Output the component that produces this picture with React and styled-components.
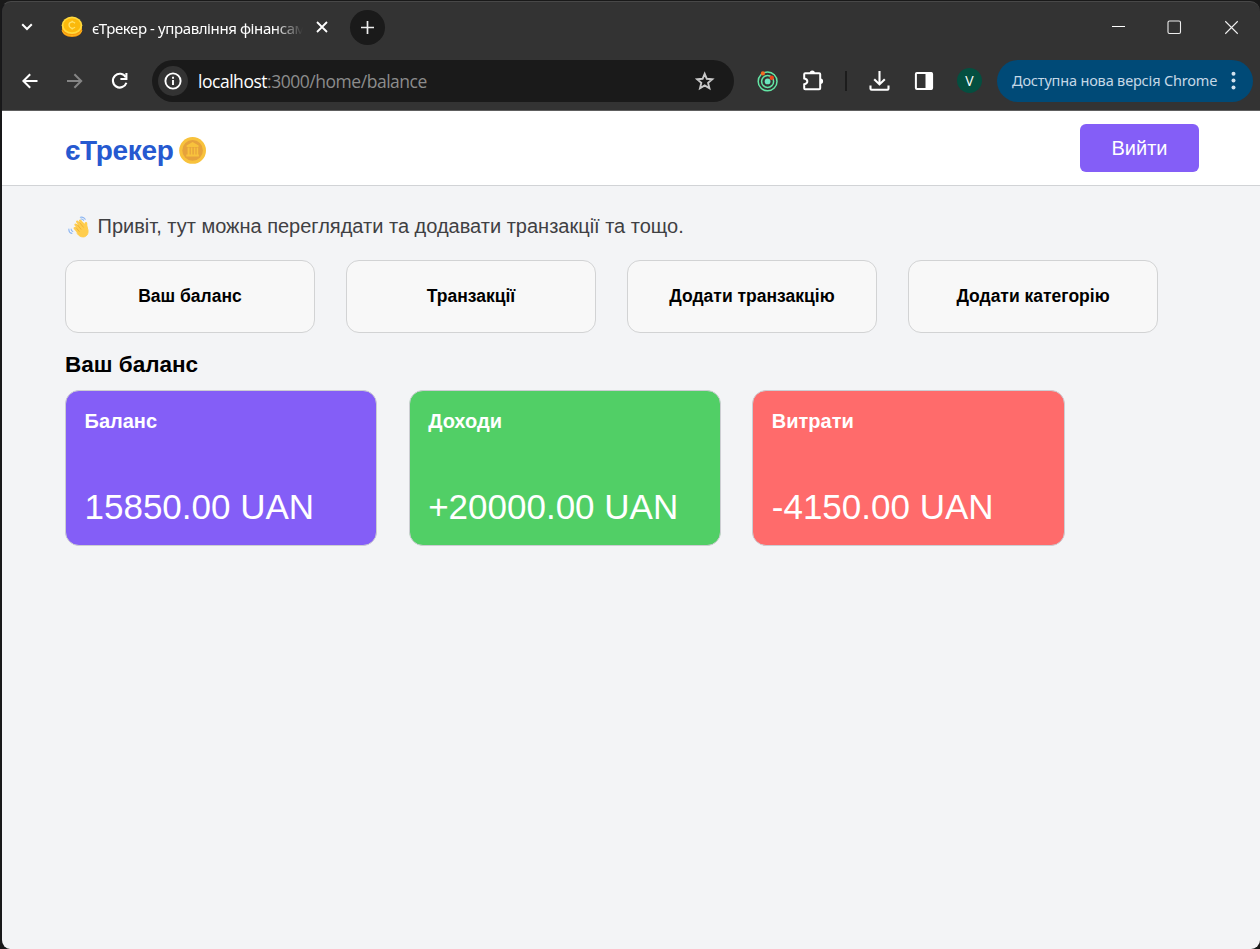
import React from "react";
import styled, { createGlobalStyle } from "styled-components";

const GlobalStyle = createGlobalStyle`
  *, *::before, *::after { box-sizing: border-box; }
  body { margin: 0; background: #191919; overflow: hidden; }
  button { font: inherit; border: 0; padding: 0; background: none; color: inherit; }
  h1, h2, h3, p { margin: 0; }
  svg { display: block; flex: none; }
`;

const Desktop = styled.div`
  height: 949px;
  padding: 1px 0 0 1px;
  background: linear-gradient(#1c1c1c 0 15px, #3a3a3a 15px 66px, #111116 66px);
`;

const Window = styled.div`
  height: 948px;
  display: flex;
  flex-direction: column;
  overflow: hidden;
  border-radius: 10px 10px 9px 9px;
  border-top: 1px solid #484848;
  border-left: 1px solid #17171a;
  background: #333333;
  box-shadow: 0 0 0 14px #191919;
`;

const TabStrip = styled.div`
  height: 52px;
  flex: none;
  display: flex;
  align-items: center;
  padding-bottom: 2px;
  color: #fff;
`;

const TabSearch = styled.button`
  width: 50px;
  height: 50px;
  display: grid;
  place-items: center;
`;

const Tab = styled.div`
  width: 279px;
  display: flex;
  align-items: center;
  padding-left: 9px;
`;

const TabTitle = styled.span`
  width: 212px;
  margin: 2px 12px 0 9px;
  overflow: hidden;
  white-space: nowrap;
  font: 15px/20px "Noto Sans", "Open Sans", sans-serif;
  letter-spacing: -0.4px;
  mask-image: linear-gradient(to right, #000 182px, transparent 211px);
`;

const NewTab = styled.button`
  width: 35px;
  height: 35px;
  margin-left: 19px;
  display: grid;
  place-items: center;
  border-radius: 50%;
  background: #1a1a1a;
`;

const Controls = styled.div`
  margin-left: auto;
  padding-right: 21px;
  display: flex;
  align-items: center;
  gap: 42px;
`;

const Toolbar = styled.div`
  height: 57px;
  flex: none;
  display: flex;
  align-items: center;
  padding: 0 7px 3px 17px;
  border-bottom: 1px solid #5e5e5e;
  color: #fff;
`;

const NavButtons = styled.div`
  width: 133px;
  display: flex;
  gap: 23px;
`;

const AddressBar = styled.div`
  width: 582px;
  height: 42px;
  display: flex;
  align-items: center;
  padding: 0 18px 0 6px;
  border-radius: 21px;
  background: #1a1a1a;
`;

const SiteInfo = styled.span`
  width: 30px;
  height: 30px;
  display: grid;
  place-items: center;
  border-radius: 50%;
  background: #333;
`;

const Url = styled.span`
  flex: 1;
  margin-left: 10px;
  font: 17.5px/24px "Open Sans", "Noto Sans", sans-serif;
  letter-spacing: -0.47px;
  color: #8c8c8c;
  white-space: nowrap;
`;

const Host = styled.span`
  color: #fff;
`;

const Extensions = styled.div`
  display: flex;
  align-items: center;
  margin-left: 23px;
`;

const Divider = styled.span`
  width: 2px;
  height: 20px;
  margin: 0 22px 0 20px;
  background: #1c1c1c;
`;

const Avatar = styled.span`
  width: 25px;
  height: 25px;
  margin: 0 15px 0 23px;
  border-radius: 50%;
  background: #044f40;
  font: 14px/25px "Open Sans", sans-serif;
  text-align: center;
`;

const UpdateChip = styled.button`
  width: 256px;
  height: 42px;
  display: flex;
  align-items: center;
  justify-content: space-between;
  padding: 0 17px 1px 15px;
  border-radius: 21px;
  background: #004a77;
  color: #c5d8e6;
  font: 14.5px/20px "Noto Sans", sans-serif;
  letter-spacing: -0.17px;
  white-space: nowrap;
`;

const Page = styled.div`
  flex: 1;
  background: #f3f4f6;
  font-family: "Liberation Sans", Arial, sans-serif;
`;

const Header = styled.header`
  height: 75px;
  display: flex;
  align-items: center;
  justify-content: space-between;
  padding: 0 61px 0 63px;
  border-bottom: 1px solid #d1d3d6;
  background: #fff;
`;

const Brand = styled.div`
  display: flex;
  align-items: center;
  gap: 5px;
  padding-top: 4px;
`;

const BrandName = styled.h1`
  width: 109px;
  font-size: 28px;
  line-height: 35px;
  letter-spacing: -0.35px;
  color: #2659d0;
  white-space: nowrap;
`;

const LogoutButton = styled.button`
  width: 119px;
  height: 48px;
  border-radius: 6px;
  background: #845ef7;
  color: #fff;
  font-size: 20px;
`;

const Main = styled.main`
  padding: 28px 63px 0;
`;

const Greeting = styled.p`
  display: flex;
  align-items: center;
  gap: 7.5px;
  height: 25px;
  padding-left: 3px;
  color: #3f4043;
  font-size: 20px;
  line-height: 25px;
  white-space: nowrap;
`;

const Menu = styled.nav`
  display: flex;
  gap: 31px;
  margin-top: 21px;
`;

const MenuItem = styled.button`
  width: 250px;
  height: 73px;
  border: 1px solid #d2d3d4;
  border-radius: 13px;
  background: #f8f8f8;
  color: #000;
  font-size: 17.5px;
  font-weight: 700;
`;

const SectionTitle = styled.h2`
  margin: 18px 0 11px;
  font-size: 22.5px;
  line-height: 28px;
`;

const Cards = styled.div`
  display: flex;
  gap: 31.25px;
`;

const Card = styled.section`
  width: 312.4px;
  height: 156px;
  display: flex;
  flex-direction: column;
  justify-content: space-between;
  padding: 18px 18px 16px 18.5px;
  border: 1px solid #cccdd2;
  border-radius: 14px;
  background: ${(p) => p.$color};
  color: #fff;
`;

const CardTitle = styled.h3`
  font-size: 20px;
  line-height: 25px;
`;

const Amount = styled.p`
  font-size: 35px;
  line-height: 45px;
  white-space: nowrap;
`;

const Chevron = () => (
  <svg width="12" height="8" viewBox="0 0 12 8" fill="none" stroke="#fff" strokeWidth="2">
    <path d="M1.2 1.2 6 6l4.8-4.8" />
  </svg>
);

const CoinStack = () => (
  <svg width="22" height="22" viewBox="0 0 22 22">
    <path d="M1 8v6c0 4 4 7 10 7s10-3 10-7V8z" fill="#f79a0c" />
    <path d="M1 14.5c2 4 6 5 10 5s8-1 10-5" fill="none" stroke="#ffb81c" strokeWidth="1" />
    <ellipse cx="11" cy="9.3" rx="10.3" ry="8.7" fill="#ffd93d" />
    <ellipse cx="11" cy="9.3" rx="8.5" ry="7" fill="#fbb90c" />
    <path d="M14 7.2c-2-2.3-6-1.4-6 1.9 0 3.2 4 4.2 6 2M11.2 4.7v1.4m0 6v1.4" fill="none" stroke="#ffe26a" strokeWidth="1.3" />
  </svg>
);

const Cross = ({ size, weight, color = "#fff" }) => (
  <svg width={size} height={size} viewBox="0 0 12 12" fill="none" stroke={color} strokeWidth={weight}>
    <path d="m1 1 10 10M11 1 1 11" />
  </svg>
);

const Arrow = ({ color, flip }) => (
  <svg width="22" height="22" viewBox="0 0 22 22" fill="none" stroke={color} strokeWidth="2">
    <path d={flip ? "M3 11h14M10.4 4.2l6.8 6.8-6.8 6.8" : "M18.5 11H4.5M11.2 4.2l-6.8 6.8 6.8 6.8"} />
  </svg>
);

const Reload = () => (
  <svg width="22" height="22" viewBox="0 0 22 22" fill="none" stroke="#fff" strokeWidth="2.1">
    <path d="M16.8 7.2a6.9 6.9 0 1 0 .6 5.5" />
    <path d="M17.4 3v6h-6" />
  </svg>
);

const Info = () => (
  <svg width="18" height="18" viewBox="0 0 18 18" fill="none" stroke="#fff" strokeWidth="1.9">
    <circle cx="9" cy="9" r="7.6" />
    <path d="M9 8v5M9 4.8v2" />
  </svg>
);

const Star = () => (
  <svg width="22" height="22" viewBox="0 0 22 22" fill="none" stroke="#c8c8c8" strokeWidth="1.9">
    <path d="m10.7 3.8 2.1 5 5.5.5-4.2 3.6 1.3 5.4-4.7-2.9L6 18.3l1.3-5.4-4.2-3.6 5.5-.5z" />
  </svg>
);

const Orbit = () => (
  <svg width="22" height="22" viewBox="0 0 22 22" fill="none" stroke="#63e6a5" strokeWidth="1.5">
    <circle cx="10.6" cy="11.4" r="9.4" />
    <circle cx="10.6" cy="11.4" r="6" />
    <circle cx="10.6" cy="11.4" r="2.9" fill="#6ce5bd" stroke="none" />
    <circle cx="5.9" cy="3.4" r="2.1" fill="#f36b22" stroke="none" />
    <circle cx="14.7" cy="7.7" r="2.2" fill="#f0461c" stroke="none" />
  </svg>
);

const Puzzle = () => (
  <svg width="24" height="24" viewBox="0 0 24 24">
    <path d="M4.2 4.2h14a1 1 0 0 1 1 1v14a1 1 0 0 1-1 1h-14a1 1 0 0 1-1-1v-3.9c4.2-.7 4.2-5.2 0-5.9V5.2a1 1 0 0 1 1-1z" fill="none" stroke="#fff" strokeWidth="2" />
    <path d="M8.7 4a2.6 2.6 0 0 1 5.2 0zM19.5 9.6a2.6 2.6 0 0 1 0 5.2z" fill="#fff" />
  </svg>
);

const Download = () => (
  <svg width="22" height="22" viewBox="0 0 22 22" fill="none" stroke="#fff" strokeWidth="2.1">
    <path d="M10.5 1v13M5.2 9.2l5.3 5.2 5.3-5.2M1.5 15.5v3.3q0 1 1 1h16q1 0 1-1v-3.3" />
  </svg>
);

const SidePanel = () => (
  <svg width="20" height="20" viewBox="0 0 20 20">
    <rect x="1.9" y="1.9" width="16.2" height="16.2" rx="1" fill="none" stroke="#fff" strokeWidth="2" />
    <path d="M11.5 1.5H18v17h-6.5z" fill="#fff" />
  </svg>
);

const Dots = () => (
  <svg width="5" height="20" viewBox="0 0 5 20" fill="#d2e2ee">
    <circle cx="2.5" cy="3.8" r="2" />
    <circle cx="2.5" cy="10.6" r="2" />
    <circle cx="2.5" cy="17.4" r="2" />
  </svg>
);

const BankCoin = () => (
  <svg width="28" height="28" viewBox="0 0 28 28">
    <circle cx="13.6" cy="14.4" r="13.4" fill="#f8c23c" />
    <circle cx="13.6" cy="14.4" r="10.3" fill="#e6a23c" />
    <path d="m13.6 5.9 6 3.5v1.5h-12V9.4zM8.6 11.4h2v7h-2zm3.2 0h1.6v7h-1.6zm3 0h1.6v7h-1.6zm2.8 0h1.6v7h-1.6zM7.3 18.6h12.6v1.8H7.3z" fill="#f8c23c" />
  </svg>
);

const Wave = () => (
  <svg width="22" height="22" viewBox="0 0 22 22" fill="none" strokeLinecap="round" strokeLinejoin="round">
    <path d="m9.5 9.5 5-3 4 3 1.4 4.2c.8 4.3-1.4 7-4.4 7.2-2.5.2-4.5-1-6-3z" fill="#ffcd4d" stroke="#ffcd4d" strokeWidth="1" />
    <path d="m12.2 4.8 5 6.5M9.3 5.8l5 6.5M7.6 8.8l4.8 5.8M6.8 12.2l4 4.6M18.2 12.5l-.2-5.3" stroke="#ffcd4d" strokeWidth="2.5" />
    <path d="m11.4 6.2 4 5M9 8.4l4 4.8M7.8 11.4l3.4 4" stroke="#e5a732" strokeWidth=".7" />
    <path d="M12.4 1.3c2-.6 3.8.2 4.8 2M13 3c1.2-.2 2 .3 2.6 1.3M.9 13c-.2 2.2.9 4 3 4.4M3.1 13c0 1.2.5 1.9 1.7 2.4" stroke="#8db6f2" strokeWidth="1.1" />
  </svg>
);

const menuItems = ["Ваш баланс", "Транзакції", "Додати транзакцію", "Додати категорію"];

const cards = [
  { title: "Баланс", amount: "15850.00 UAN", color: "#845ef7" },
  { title: "Доходи", amount: "+20000.00 UAN", color: "#51cf66" },
  { title: "Витрати", amount: "-4150.00 UAN", color: "#ff6b6b" },
];

const Gap = styled.span`
  width: ${(p) => p.$w}px;
`;

export default function App() {
  return (
    <Desktop>
      <GlobalStyle />
      <Window>
        <TabStrip>
          <TabSearch><Chevron /></TabSearch>
          <Tab>
            <CoinStack />
            <TabTitle>єТрекер - управління фінансами</TabTitle>
            <Cross size={12} weight={1.8} />
          </Tab>
          <NewTab>
            <svg width="13" height="13" viewBox="0 0 13 13" stroke="#eee" strokeWidth="1.7">
              <path d="M6.5 0v13M0 6.5h13" />
            </svg>
          </NewTab>
          <Controls>
            <svg width="13" height="14" viewBox="0 0 13 14"><path d="M0 6.5h13" stroke="#fff" /></svg>
            <svg width="15" height="15" viewBox="0 0 15 15"><rect x="1" y="1" width="12.5" height="12.5" rx="1.5" fill="none" stroke="#eee" strokeWidth="1.1" /></svg>
            <Cross size={15} weight={0.9} color="#eee" />
          </Controls>
        </TabStrip>
        <Toolbar>
          <NavButtons>
            <Arrow color="#fff" />
            <Arrow color="#858585" flip />
            <Reload />
          </NavButtons>
          <AddressBar>
            <SiteInfo><Info /></SiteInfo>
            <Url><Host>localhost</Host>:3000/home/balance</Url>
            <Star />
          </AddressBar>
          <Extensions>
            <Orbit />
            <Gap $w={22} />
            <Puzzle />
            <Divider />
            <Download />
            <Gap $w={23} />
            <SidePanel />
            <Avatar>V</Avatar>
          </Extensions>
          <UpdateChip>
            Доступна нова версія Chrome
            <Dots />
          </UpdateChip>
        </Toolbar>
        <Page>
          <Header>
            <Brand>
              <BrandName>єТрекер</BrandName>
              <BankCoin />
            </Brand>
            <LogoutButton>Вийти</LogoutButton>
          </Header>
          <Main>
            <Greeting>
              <Wave />
              Привіт, тут можна переглядати та додавати транзакції та тощо.
            </Greeting>
            <Menu>
              {menuItems.map((label) => <MenuItem key={label}>{label}</MenuItem>)}
            </Menu>
            <SectionTitle>Ваш баланс</SectionTitle>
            <Cards>
              {cards.map((card) => (
                <Card key={card.title} $color={card.color}>
                  <CardTitle>{card.title}</CardTitle>
                  <Amount>{card.amount}</Amount>
                </Card>
              ))}
            </Cards>
          </Main>
        </Page>
      </Window>
    </Desktop>
  );
}
